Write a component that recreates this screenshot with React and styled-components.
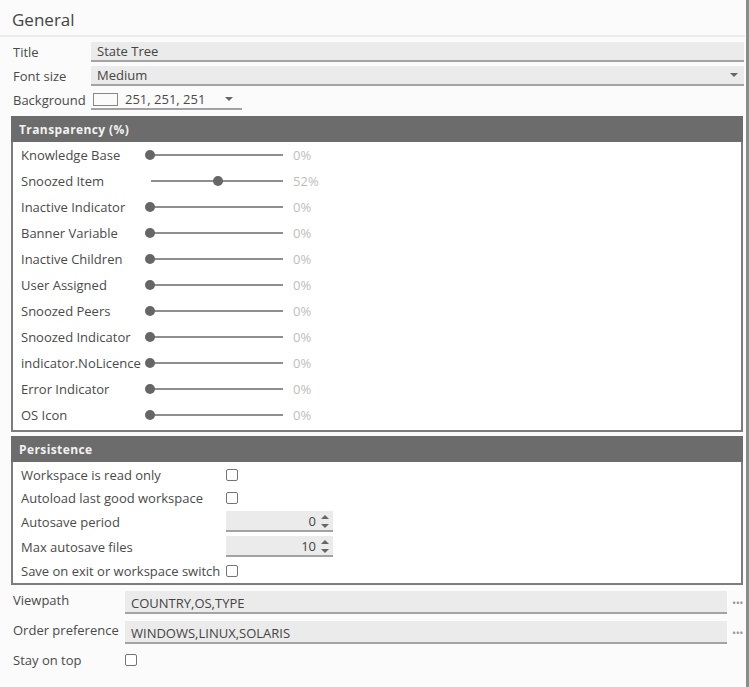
import React from 'react'
import styled, { createGlobalStyle } from 'styled-components'

const Global = createGlobalStyle`
  html, body {
    margin: 0;
    padding: 0;
    background: #fbfbfb;
  }
  body {
    font-family: "Open Sans", "Noto Sans", sans-serif;
    font-size: 13px;
    color: #4a4a4a;
  }
`

const Page = styled.div`
  width: 746px;
  height: 687px;
  border-right: 3px solid #8c8c8c;
  box-sizing: content-box;
  display: flex;
  flex-direction: column;
`

const Heading = styled.div`
  height: 37px;
  box-sizing: border-box;
  padding-top: 3px;
  display: flex;
  align-items: center;
  padding-left: 12px;
  font-size: 17px;
  color: #444;
  border-bottom: 2px solid #ececec;
  margin-right: 1px;
`

const General = styled.div`
  display: flex;
  flex-direction: column;
  gap: 4px;
  padding: 5px 2px 0 13px;
`

const FieldRow = styled.div`
  display: flex;
  align-items: center;
  height: 20px;
`

const Label = styled.div`
  width: ${p => p.$w}px;
  flex-shrink: 0;
  white-space: nowrap;
  align-self: ${p => (p.$top ? 'flex-start' : 'center')};
  line-height: ${p => (p.$top ? '18px' : 'normal')};
`

const Input = styled.div`
  flex: 1;
  height: 100%;
  box-sizing: border-box;
  background: #ebebeb;
  border-bottom: 2px solid #a3a3a3;
  display: flex;
  align-items: center;
  padding-left: 6px;
  padding-right: 6px;
  color: #444;
`

const Arrow = styled.span`
  margin-left: auto;
  width: 0;
  height: 0;
  border-left: 4px solid transparent;
  border-right: 4px solid transparent;
  border-top: 4px solid #666;
`

const ColorField = styled.div`
  width: 151px;
  height: 100%;
  box-sizing: border-box;
  border-bottom: 2px solid #a3a3a3;
  display: flex;
  align-items: center;
  padding: 0 9px 0 2px;
  gap: 7px;
`

const Swatch = styled.span`
  width: 25px;
  height: 13px;
  box-sizing: border-box;
  border: 1px solid #888;
  background: rgb(251, 251, 251);
`

const Group = styled.div`
  margin: ${p => p.$mt}px 3px 0 11px;
  border: 2px solid #7d7d7d;
  border-top: none;
  background: #fff;
`

const GroupHeader = styled.div`
  height: 26px;
  background: #6b6c6b;
  color: #f2f2f2;
  font-weight: 700;
  font-size: 12px;
  letter-spacing: 0.4px;
  display: flex;
  align-items: center;
  margin: 0 -2px;
  padding-left: 8px;
`

const SliderRow = styled.div`
  height: 26px;
  display: flex;
  align-items: center;
  padding-left: 8px;
`

const Slider = styled.div`
  position: relative;
  width: 141px;
  height: 12px;
  flex-shrink: 0;
  margin-left: -1px;
`

const Track = styled.div`
  position: absolute;
  left: ${p => (p.$inset ? 6 : 5)}px;
  right: 3px;
  top: 5px;
  height: 2px;
  background: #8e8e8e;
`

const Thumb = styled.div`
  position: absolute;
  top: 1px;
  width: 10px;
  height: 10px;
  border-radius: 50%;
  background: #666;
`

const Value = styled.div`
  margin-left: 7px;
  color: #bdbdbd;
`

const Spacer = styled.div`
  height: ${p => p.$h}px;
`

const PRow = styled.div`
  height: ${p => p.$h}px;
  display: flex;
  align-items: center;
  padding-left: 8px;
`

const Check = styled.span`
  width: 12px;
  height: 12px;
  box-sizing: border-box;
  border: 1.5px solid #747474;
  border-radius: 2px;
  background: #fff;
  flex-shrink: 0;
`

const Spin = styled.div`
  width: 107px;
  height: 21px;
  box-sizing: border-box;
  background: #ebebeb;
  border-bottom: 2px solid #a3a3a3;
  display: flex;
  align-items: center;
  justify-content: flex-end;
  padding-right: 4px;
  gap: 5px;
  color: #444;
`

const SpinArrows = styled.span`
  display: flex;
  flex-direction: column;
  gap: 5px;
  padding-top: 1px;
`

const Tri = styled.span`
  width: 0;
  height: 0;
  border-left: 4px solid transparent;
  border-right: 4px solid transparent;
  ${p => (p.$up ? 'border-bottom: 4px solid #666;' : 'border-top: 4px solid #666;')}
`

const Bottom = styled.div`
  display: flex;
  flex-direction: column;
  padding: 6px 0 0 13px;
  gap: 7px;
`

const PathRow = styled.div`
  display: flex;
  height: ${p => p.$h}px;
  align-items: center;
`

const PathInput = styled(Input)`
  flex: none;
  width: 602px;
  padding-top: 2px;
`

const More = styled.span`
  margin-left: 5px;
  color: #999;
  font-size: 11px;
  letter-spacing: -0.5px;
`

const sliders = [
  ['Knowledge Base', 0],
  ['Snoozed Item', 52],
  ['Inactive Indicator', 0],
  ['Banner Variable', 0],
  ['Inactive Children', 0],
  ['User Assigned', 0],
  ['Snoozed Peers', 0],
  ['Snoozed Indicator', 0],
  ['indicator.NoLicence', 0],
  ['Error Indicator', 0],
  ['OS Icon', 0],
]

const SpinBox = ({ value }) => (
  <Spin>
    {value}
    <SpinArrows>
      <Tri $up />
      <Tri />
    </SpinArrows>
  </Spin>
)

export default function App() {
  return (
    <Page>
      <Global />
      <Heading>General</Heading>
      <General>
        <FieldRow>
          <Label $w={78}>Title</Label>
          <Input>State Tree</Input>
        </FieldRow>
        <FieldRow>
          <Label $w={78}>Font size</Label>
          <Input>
            Medium
            <Arrow />
          </Input>
        </FieldRow>
        <FieldRow>
          <Label $w={78}>Background</Label>
          <ColorField>
            <Swatch />
            251, 251, 251
            <Arrow />
          </ColorField>
        </FieldRow>
      </General>
      <Group $mt={6}>
        <GroupHeader>Transparency (%)</GroupHeader>
        {sliders.map(([name, pct]) => (
          <SliderRow key={name}>
            <Label $w={125}>{name}</Label>
            <Slider>
              <Track $inset={pct > 0} />
              <Thumb style={{ left: (pct / 100) * 131 }} />
            </Slider>
            <Value>{pct}%</Value>
          </SliderRow>
        ))}
        <Spacer $h={2} />
      </Group>
      <Group $mt={4}>
        <GroupHeader>Persistence</GroupHeader>
        <PRow $h={25}>
          <Label $w={205}>Workspace is read only</Label>
          <Check />
        </PRow>
        <PRow $h={22}>
          <Label $w={205}>Autoload last good workspace</Label>
          <Check />
        </PRow>
        <PRow $h={25}>
          <Label $w={205}>Autosave period</Label>
          <SpinBox value={0} />
        </PRow>
        <PRow $h={25}>
          <Label $w={205}>Max autosave files</Label>
          <SpinBox value={10} />
        </PRow>
        <PRow $h={24}>
          <Label $w={205}>Save on exit or workspace switch</Label>
          <Check />
        </PRow>
      </Group>
      <Bottom>
        <PathRow $h={23}>
          <Label $w={112} $top>Viewpath</Label>
          <PathInput>COUNTRY,OS,TYPE</PathInput>
          <More>•••</More>
        </PathRow>
        <PathRow $h={23}>
          <Label $w={112} $top>Order preference</Label>
          <PathInput>WINDOWS,LINUX,SOLARIS</PathInput>
          <More>•••</More>
        </PathRow>
        <PathRow $h={18}>
          <Label $w={112}>Stay on top</Label>
          <Check />
        </PathRow>
      </Bottom>
    </Page>
  )
}
